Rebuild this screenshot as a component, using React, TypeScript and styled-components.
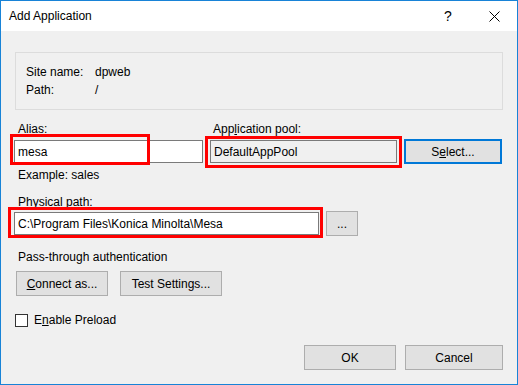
import React from 'react';
import styled, { createGlobalStyle } from 'styled-components';

const GlobalStyle = createGlobalStyle`
  body {
    margin: 0;
    background: #ffffff;
    font-family: "Liberation Sans", Arial, sans-serif;
    font-size: 12px;
    color: #000;
  }
`;

const Window = styled.div`
  width: 518px;
  height: 385px;
  box-sizing: border-box;
  border: 1px solid #1883d7;
  display: flex;
  flex-direction: column;
`;

const TitleBar = styled.div`
  height: 30px;
  background: #ffffff;
  display: flex;
  align-items: center;
  padding-left: 8px;
`;

const Title = styled.div`
  flex: 1;
  line-height: 14px;
`;

const CaptionButton = styled.div`
  width: 46px;
  height: 30px;
  display: flex;
  align-items: center;
  justify-content: center;
  font-size: 14px;
`;

const Body = styled.div`
  flex: 1;
  background: #f0f0f0;
  padding: 21px 14px 14px 13px;
  display: flex;
  flex-direction: column;
`;

const GroupBox = styled.div`
  margin-left: 1px;
  height: 58px;
  box-sizing: border-box;
  border: 1px solid #dcdcdc;
  padding: 10px 0 0 10px;
  display: grid;
  grid-template-columns: 69px auto;
  grid-auto-rows: 18px;
  align-items: center;
  align-content: start;
`;

const FieldRow = styled.div`
  display: flex;
  align-items: flex-end;
  gap: 7px;
  margin-top: 12px;
`;

const Field = styled.div<{ $width: number }>`
  width: ${({ $width }) => $width}px;
  display: flex;
  flex-direction: column;
  gap: 4px;
`;

const Label = styled.div<{ $indent?: number; $gap?: number }>`
  line-height: 14px;
  padding-left: ${({ $indent }) => $indent ?? 4}px;
  margin-top: ${({ $gap }) => $gap ?? 0}px;
`;

const TextBox = styled.div<{ $readOnly?: boolean; $width?: number }>`
  position: relative;
  height: 23px;
  ${({ $width }) => ($width ? `width: ${$width}px;` : '')}
  box-sizing: border-box;
  border: 1px solid #7a7a7a;
  background: ${({ $readOnly }) => ($readOnly ? '#f0f0f0' : '#ffffff')};
  padding: 0 3px;
  display: flex;
  align-items: center;
`;

// red annotation boxes drawn over the inputs
const Highlight = styled.div<{ $left: number; $top: number; $w: number; $h: number }>`
  position: absolute;
  left: ${({ $left }) => $left}px;
  top: ${({ $top }) => $top}px;
  width: ${({ $w }) => $w}px;
  height: ${({ $h }) => $h}px;
  box-sizing: border-box;
  border: 3px solid #ff0000;
  pointer-events: none;
`;

const Button = styled.button<{ $width: number; $default?: boolean }>`
  width: ${({ $width }) => $width}px;
  height: 25px;
  box-sizing: border-box;
  padding: 0;
  font-family: inherit;
  font-size: 12px;
  color: #000;
  background: #e1e1e1;
  border: ${({ $default }) => ($default ? '2px solid #0078d7' : '1px solid #adadad')};
  ${({ $default }) => ($default ? 'margin-bottom: -1px;' : '')}
`;

const Key = styled.span`
  text-decoration: underline;
`;

const PathRow = styled.div`
  display: flex;
  align-items: center;
  gap: 7px;
  margin-top: 2px;
`;

const ButtonRow = styled.div`
  display: flex;
  gap: 12px;
  margin: 7px 0 0 2px;
`;

const CheckRow = styled.label`
  display: flex;
  align-items: center;
  gap: 6px;
  margin: 17px 0 0 1px;
  line-height: 14px;
`;

const CheckBox = styled.span`
  width: 13px;
  height: 13px;
  box-sizing: border-box;
  border: 1px solid #333333;
  background: #ffffff;
`;

const Footer = styled.div`
  margin-top: auto;
  display: flex;
  justify-content: flex-end;
  gap: 9px;
`;

const App: React.FC = () => {
  return (
    <>
      <GlobalStyle />
      <Window>
        <TitleBar>
          <Title>Add Application</Title>
          <CaptionButton>?</CaptionButton>
          <CaptionButton>
            <svg width="11" height="11" viewBox="0 0 11 11">
              <path d="M0.5 0.5 L10.5 10.5 M10.5 0.5 L0.5 10.5" stroke="#000" strokeWidth="1" />
            </svg>
          </CaptionButton>
        </TitleBar>
        <Body>
          <GroupBox>
            <span>Site name:</span>
            <span>dpweb</span>
            <span>Path:</span>
            <span>/</span>
          </GroupBox>

          <FieldRow>
            <Field $width={189}>
              <Label>Alias:</Label>
              <TextBox>
                mesa
                <Highlight $left={-5} $top={-7} $w={140} $h={31} />
              </TextBox>
            </Field>
            <Field $width={187}>
              <Label $indent={3}>
                App<Key>l</Key>ication pool:
              </Label>
              <TextBox $readOnly>
                DefaultAppPool
                <Highlight $left={-6} $top={-5} $w={197} $h={32} />
              </TextBox>
            </Field>
            <Button $width={98} $default>
              S<Key>e</Key>lect...
            </Button>
          </FieldRow>

          <Label $gap={5}>Example: sales</Label>

          <Label $gap={13}>Physical path:</Label>
          <PathRow>
            <TextBox $width={305}>
              C:\Program Files\Konica Minolta\Mesa
              <Highlight $left={-7} $top={-6} $w={315} $h={31} />
            </TextBox>
            <Button $width={32}>...</Button>
          </PathRow>

          <Label $gap={14}>Pass-through authentication</Label>
          <ButtonRow>
            <Button $width={92}>
              <Key>C</Key>onnect as...
            </Button>
            <Button $width={102}>
              Test Settin<Key>g</Key>s...
            </Button>
          </ButtonRow>

          <CheckRow>
            <CheckBox />
            <span>
              E<Key>n</Key>able Preload
            </span>
          </CheckRow>

          <Footer>
            <Button $width={92}>OK</Button>
            <Button $width={98}>Cancel</Button>
          </Footer>
        </Body>
      </Window>
    </>
  );
};

export default App;
